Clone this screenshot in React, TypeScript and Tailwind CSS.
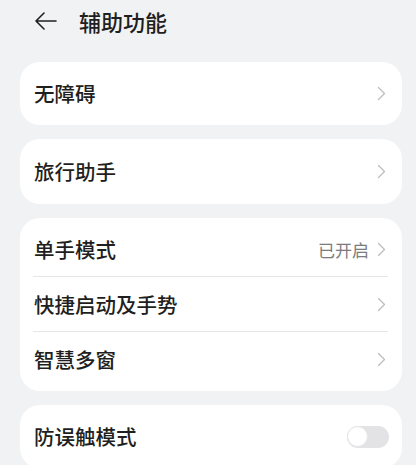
import React from "react";

const Chevron = () => (
  <svg width="9" height="15" viewBox="0 0 9 15" className="shrink-0">
    <path d="M1.5 1.5 L7.5 7.5 L1.5 13.5" fill="none" stroke="#bdbdbf" strokeWidth="1.3" strokeLinecap="round" strokeLinejoin="round" />
  </svg>
);

const Row = ({ label, value, divider, toggle }: { label: string; value?: string; divider?: boolean; toggle?: boolean }) => (
  <div className="relative flex h-[55px] items-center pl-[14px] pr-[16px]">
    <span className="flex-1 text-[20.5px] font-medium text-[#1f1f21] leading-none">{label}</span>
    {value && <span className="mr-[8px] text-[17px] text-[#7c7c7e] leading-none">{value}</span>}
    {toggle ? (
      <div className="mr-[-3px] flex h-[22px] w-[42px] items-center rounded-full bg-[#e3e3e5]">
        <div className="h-[21px] w-[21px] rounded-full border border-[#e6e6e8] bg-white" />
      </div>
    ) : (
      <Chevron />
    )}
    {divider && <div className="absolute bottom-0 left-[13px] right-[14px] h-px bg-[#e6e6e8]" />}
  </div>
);

export default function App() {
  return (
    <div
      className="h-[465px] w-[416px] overflow-hidden bg-[#f1f2f4]"
      style={{ fontFamily: '"Noto Sans CJK SC", "Noto Sans", sans-serif' }}
    >
      <div className="flex h-[62px] items-start pt-[8px] pl-[34px]">
        <svg width="24" height="20" viewBox="0 0 24 20" className="mt-[3px]">
          <path d="M22 10 H2 M10 2 L2 10 L10 18" fill="none" stroke="#1f1f21" strokeWidth="1.6" strokeLinecap="round" strokeLinejoin="round" />
        </svg>
        <span className="ml-[21px] text-[22px] font-medium leading-[26px] text-[#1f1f21]">辅助功能</span>
      </div>
      <div className="flex flex-col gap-[14px] pl-[20px] pr-[14px]">
        <div className="rounded-[20px] bg-white py-[4px]">
          <Row label="无障碍" />
        </div>
        <div className="rounded-[20px] bg-white py-[5px]">
          <Row label="旅行助手" />
        </div>
        <div className="rounded-[20px] bg-white py-[4px]">
          <Row label="单手模式" value="已开启" divider />
          <Row label="快捷启动及手势" divider />
          <Row label="智慧多窗" />
        </div>
        <div className="rounded-[20px] bg-white py-[4px]">
          <Row label="防误触模式" toggle />
        </div>
      </div>
    </div>
  );
}
